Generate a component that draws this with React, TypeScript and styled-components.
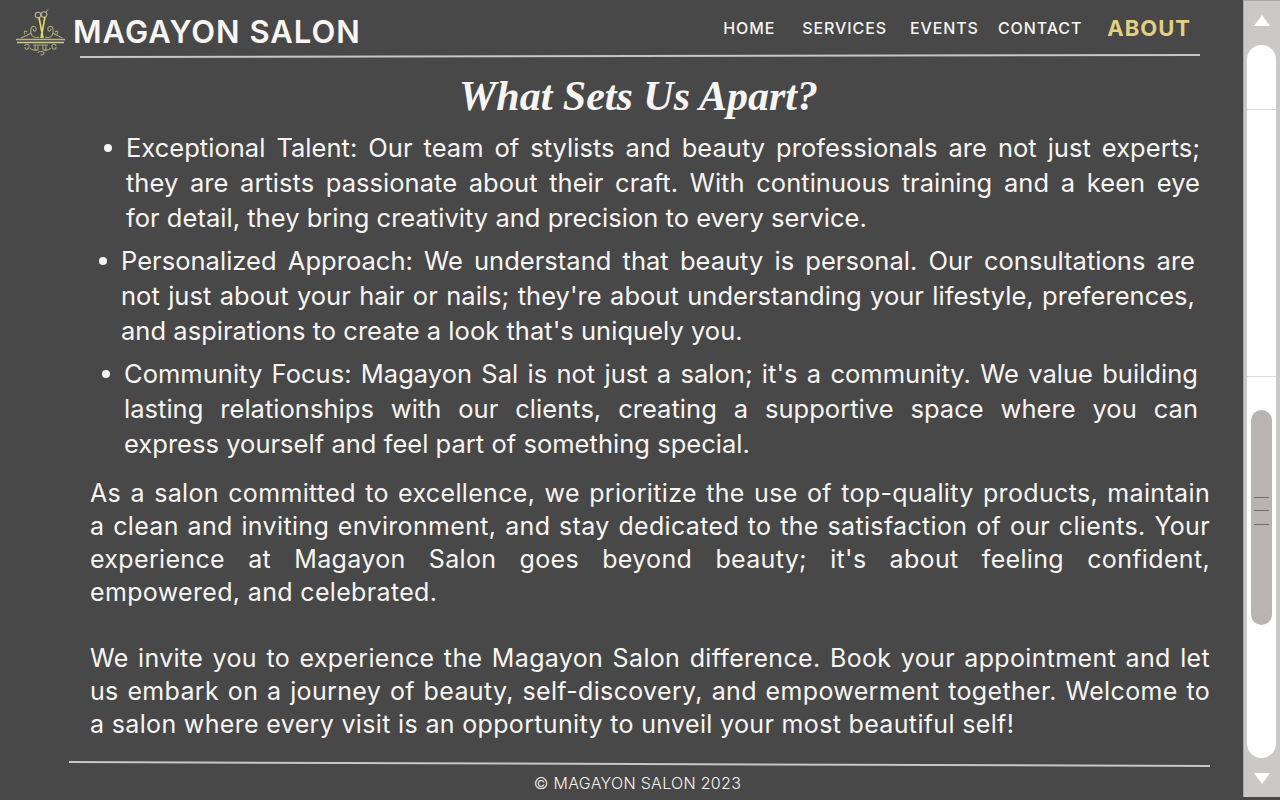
import React from "react";
import styled, { createGlobalStyle } from "styled-components";

const Global = createGlobalStyle`
  html, body { margin: 0; padding: 0; height: 800px; overflow: hidden; background: #484848; }
  #root { height: 800px; }
`;
const Page = styled.div`
  display: flex; width: 1280px; height: 800px; background: #484848; color: #f7f5f3;
  font-family: Inter, "Open Sans", sans-serif; overflow: hidden;
`;
const Main = styled.main`
  flex: 1; min-width: 0; display: flex; flex-direction: column;
`;
const Header = styled.header`
  display: flex; align-items: flex-start; height: 55px; padding-left: 16px;
`;
const Logo = styled.svg`
  width: 50px; height: 48px; margin-top: 9px; flex: none;
`;
const Brand = styled.div`
  margin: 14px 0 0 7px; font-size: 31px; line-height: 36px; font-weight: 600; letter-spacing: 1px; white-space: nowrap; color: #f7f5f3;
`;
const Nav = styled.nav`
  display: flex; margin-left: auto; padding-right: 52px; align-items: center; height: 36px; margin-top: 10px;
`;
const NavItem = styled.a<{ $gap: number; $active?: boolean }>`
  margin-left: ${p => p.$gap}px;
  font-size: ${p => (p.$active ? 22 : 16)}px;
  font-weight: ${p => (p.$active ? 700 : 500)};
  letter-spacing: ${p => (p.$active ? 1 : 0.9)}px;
  color: ${p => (p.$active ? "#e3d083" : "#f7f5f3")};
  white-space: nowrap;
`;
const Rule = styled.hr<{ $left: number; $width: number; $tilt: number }>`
  margin: 0 0 0 ${p => p.$left}px; width: ${p => p.$width}px; height: 1.5px; border: 0; flex: none;
  background: #c9c7c5; transform: rotate(${p => p.$tilt}deg);
`;
const Title = styled.h1`
  margin: 8px 0 0; height: 65px; text-align: center; padding-left: 34px;
  font-family: "Liberation Serif", serif; font-style: italic; font-weight: 700; font-size: 42px; line-height: 62px; color: #f7f5f3;
`;
const Bullets = styled.ul`
  list-style: none; margin: 0; padding: 0; display: flex; flex-direction: column; gap: 8px; height: 347px;
`;
const Bullet = styled.li<{ $left: number }>`
  position: relative; margin-left: ${p => p.$left}px; width: 1074px; font-size: 25.5px; line-height: 35px; letter-spacing: 0.03px;
  &::before { content: ""; position: absolute; left: -22px; top: 14px; width: 8px; height: 8px; border-radius: 50%; background: #f7f5f3; }
`;
const Line = styled.span<{ $last?: boolean }>`
  display: block; text-align: justify; text-align-last: ${p => (p.$last ? "left" : "justify")};
`;
const Para = styled.p`
  margin: 0 0 0 90px; width: 1120px; height: 264px; font-size: 25px; line-height: 33px; letter-spacing: 0.34px;
`;
const FooterRule = styled.div`
  margin-top: 22px;
`;
const Footer = styled.footer`
  text-align: center; font-size: 16px; line-height: 20px; padding: 9px 0 0 32px; letter-spacing: 0.3px; font-weight: 300;
`;
const Scroll = styled.aside`
  width: 37px; height: 797px; flex: none; background: #cbc8c8; position: relative; display: flex; flex-direction: column; align-items: center; box-sizing: border-box; border-top: 1px solid #a8a6a6; border-left: 1px solid #a8a6a6; padding-right: 1px;
`;
const Arrow = styled.div<{ $down?: boolean }>`
  width: 0; height: 0; border-left: 8px solid transparent; border-right: 8px solid transparent; flex: none;
  ${p => (p.$down ? "border-top: 11px solid #fff; margin-top: 15px;" : "border-bottom: 11px solid #fff; margin: 14px 0 19px;")}
`;
const Track = styled.div`
  width: 29px; height: 713px; background: #fff; border-radius: 15px; flex: none; position: relative;
`;
const Seam = styled.div<{ $y: number }>`
  position: absolute; left: 0; right: 0; top: ${p => p.$y}px; height: 1px; background: #dcdada;
`;
const Thumb = styled.div`
  position: absolute; left: 4px; width: 21px; top: 365px; height: 215px; border-radius: 11px; background: #b8b4b4; display: flex; flex-direction: column; gap: 12.3px; align-items: center; padding-top: 87px; box-sizing: border-box;
`;
const Grip = styled.div`
  width: 15px; height: 1px; background: #6e6c6c; flex: none;
`;

const Curl = ({ d }: { d: string }) => <path d={d} fill="none" stroke="#a9a67a" strokeWidth="1.1" />;

export default function App() {
  return (
    <Page>
      <Global />
      <Main>
        <Header>
          <Logo viewBox="0 0 50 48">
            <circle cx="22" cy="6" r="2.8" fill="none" stroke="#b7b49a" strokeWidth="1.1" />
            <circle cx="28" cy="5.5" r="2.8" fill="none" stroke="#b7b49a" strokeWidth="1.1" />
            <path d="M23 8.5 L27 29 M29 8 L25 29" stroke="#e4dc62" strokeWidth="1.6" fill="none" />
            <path d="M30 3 L32 0.5" stroke="#b7b49a" strokeWidth="1" />
            <Curl d="M23 28 C17 30 14 26 15 20 C16 16 21 17 20 21 C19 23 17 22 17 20" />
            <Curl d="M29 28 C35 30 38 26 37 20 C36 16 31 17 32 21 C33 23 35 22 35 20" />
            <Curl d="M15 24 C12 26 9 27 5 29 M37 24 C40 26 43 27 46 29" />
            <Curl d="M9 25 C7 23 9 21 11 23 M41 25 C43 23 41 21 39 23" />
            <path d="M0 30.5 H49" stroke="#b5b286" strokeWidth="1.3" />
            <path d="M1 33.5 H48" stroke="#d0cc8a" strokeWidth="1.6" />
            <Curl d="M9 37 C9 34 14 35 13 38 C12 41 9 41 9 38 M40 37 C40 34 35 35 36 38 C37 41 40 41 40 38" />
            <Curl d="M17 36 H32 M19 36 V41 H22 V36 M27 36 V41 H30 V36" />
            <Curl d="M14 39 C16 42 19 41 21 41 M35 39 C33 42 30 41 28 41" />
            <Curl d="M22 44 C22 42 28 42 28 44 C28 46 25 46.5 25 45" />
          </Logo>
          <Brand>MAGAYON SALON</Brand>
          <Nav>
            <NavItem $gap={0}>HOME</NavItem>
            <NavItem $gap={27}>SERVICES</NavItem>
            <NavItem $gap={23}>EVENTS</NavItem>
            <NavItem $gap={19}>CONTACT</NavItem>
            <NavItem $gap={25} $active>ABOUT</NavItem>
          </Nav>
        </Header>
        <Rule $left={80} $width={1120} $tilt={-0.1} />
        <Title>What Sets Us Apart?</Title>
        <Bullets>
          <Bullet $left={126}>
            <Line>Exceptional Talent: Our team of stylists and beauty professionals are not just experts;</Line>
            <Line>they are artists passionate about their craft. With continuous training and a keen eye</Line>
            <Line $last>for detail, they bring creativity and precision to every service.</Line>
          </Bullet>
          <Bullet $left={121}>
            <Line>Personalized Approach: We understand that beauty is personal. Our consultations are</Line>
            <Line>not just about your hair or nails; they're about understanding your lifestyle, preferences,</Line>
            <Line $last>and aspirations to create a look that's uniquely you.</Line>
          </Bullet>
          <Bullet $left={124}>
            <Line>Community Focus: Magayon Sal is not just a salon; it's a community. We value building</Line>
            <Line>lasting relationships with our clients, creating a supportive space where you can</Line>
            <Line $last>express yourself and feel part of something special.</Line>
          </Bullet>
        </Bullets>
        <Para>
          <Line>As a salon committed to excellence, we prioritize the use of top-quality products, maintain</Line>
          <Line>a clean and inviting environment, and stay dedicated to the satisfaction of our clients. Your</Line>
          <Line>experience at Magayon Salon goes beyond beauty; it's about feeling confident,</Line>
          <Line $last>empowered, and celebrated.</Line>
          <Line $last>&nbsp;</Line>
          <Line>We invite you to experience the Magayon Salon difference. Book your appointment and let</Line>
          <Line>us embark on a journey of beauty, self-discovery, and empowerment together. Welcome to</Line>
          <Line $last>a salon where every visit is an opportunity to unveil your most beautiful self!</Line>
        </Para>
        <FooterRule>
          <Rule $left={69} $width={1141} $tilt={0.2} />
        </FooterRule>
        <Footer>© MAGAYON SALON 2023</Footer>
      </Main>
      <Scroll>
        <Arrow />
        <Track>
          <Seam $y={64} />
          <Seam $y={331} />
          <Thumb>
            <Grip />
            <Grip />
            <Grip />
          </Thumb>
        </Track>
        <Arrow $down />
      </Scroll>
    </Page>
  );
}
